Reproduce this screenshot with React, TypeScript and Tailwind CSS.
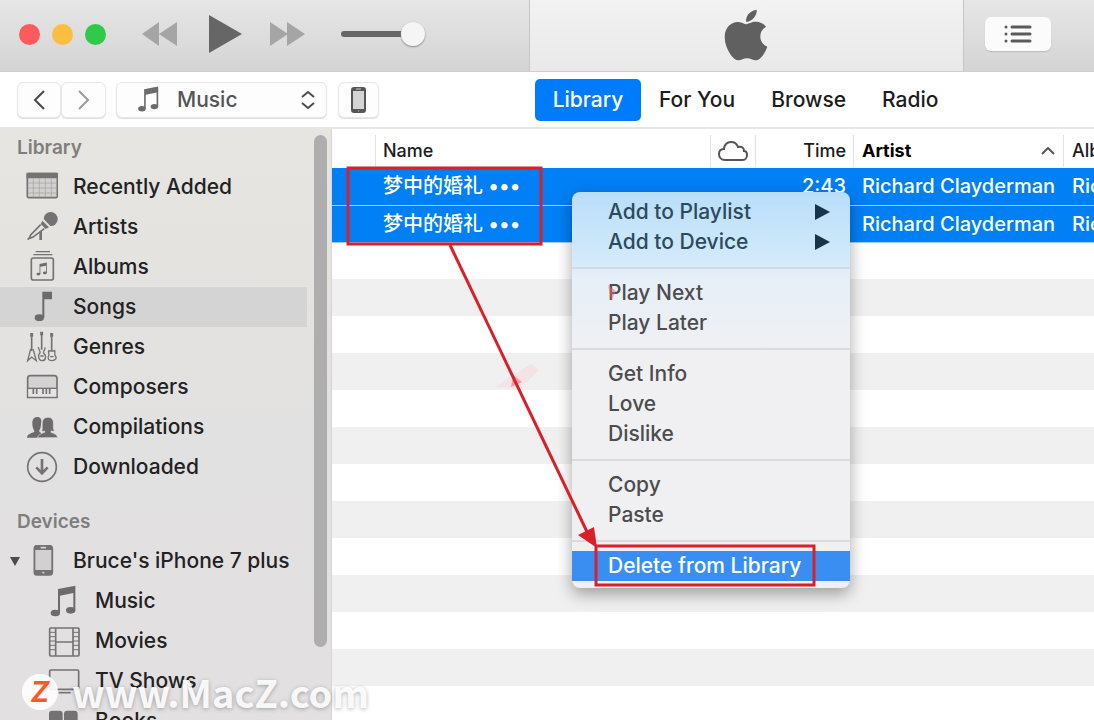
import React from 'react';
import { FaApple } from 'react-icons/fa';

const Svg: React.FC<{ children: React.ReactNode }> = ({ children }) => (
  <svg viewBox="0 0 96 96" className="w-8 h-8 shrink-0" fill="none" stroke="#747273" strokeWidth="5" aria-hidden="true">
    {children}
  </svg>
);

const NoteShape = () => (
  <g fill="#6b6b6b" stroke="none">
    <path d="M30 12 L82 2 V76 H76 V24 L36 32 V84 H30 Z" />
    <ellipse cx="22" cy="84" rx="14" ry="10" />
    <ellipse cx="68" cy="76" rx="14" ry="10" />
  </g>
);

const RecentIcon = () => (
  <Svg>
    <rect x="4" y="8" width="90" height="72" rx="4" fill="#d3d1cf" />
    <path d="M4 8h90v11H4z" fill="#747273" />
    <path d="M22 22v57M40 22v57M58 22v57M76 22v57M6 36h86M6 51h86M6 66h86" strokeWidth="2" stroke="#a3a19f" />
  </Svg>
);

const MicIcon = () => (
  <Svg>
    <path d="M53 24 A21 21 0 1 1 73 45 Z" fill="#747273" stroke="none" />
    <path d="M49 29 L69 49 L59 54 L44 39 Z" fill="#747273" stroke="none" />
    <path d="M44 41 L14 72 L10 82 L20 79 L55 53 M14 77 L5 86" />
    <path d="M40 66 L48 59 V87 H40 Z" fill="#747273" stroke="none" />
  </Svg>
);

const AlbumIcon = () => (
  <Svg>
    <path d="M29 2h43M22 11h57" strokeWidth="4" />
    <rect x="16" y="21" width="66" height="66" rx="6" />
    <g transform="translate(28 34) scale(0.42)">
      <NoteShape />
    </g>
  </Svg>
);

const SongIcon = () => (
  <Svg>
    <g fill="#6b6b6b" stroke="none">
      <path d="M49 2h29v23H55v55h-6z" />
      <ellipse cx="40" cy="80" rx="14" ry="10" />
    </g>
  </Svg>
);

const GenreIcon = () => (
  <Svg>
    <g strokeWidth="5">
      <path d="M17 16V60M47 12V56M77 16V60" />
      <path d="M17 6v11M47 2v11M77 6v11" strokeWidth="9" />
    </g>
    <g strokeWidth="4">
      <path d="M14 54 L5 89 L17 78 L31 89 L21 54" />
      <path d="M37 48 C38 58 44 59 42 66 C34 72 38 88 47 89 C60 90 62 74 53 67 C50 60 58 59 57 49 M43 75h10" />
      <path d="M69 57 C64 65 72 68 68 74 C63 82 68 89 77 89 C90 89 94 80 87 73 C84 68 90 63 85 57 M70 60h15M72 77h11" />
    </g>
  </Svg>
);

const PianoIcon = () => (
  <Svg>
    <path d="M5 79V22q0-8 8-8h72q8 0 8 8v57z" fill="#d4d2d2" />
    <path d="M7 54h84v23H7z" fill="#e6e4e4" stroke="none" />
    <path d="M5 52h88" strokeWidth="4" />
    <path d="M22 54v15M32 54v15M51 54v15M61 54v15M71 54v15" strokeWidth="5" />
  </Svg>
);

const PeopleIcon = () => (
  <Svg>
    <g fill="#6c6a6b" stroke="none">
      <path d="M3 80 C4 70 12 68 25 63 C26 58 19 52 19 38 C19 24 24 18 34 18 C43 18 46 24 46 31 C44 42 46 50 40 58 V63 C49 66 53 72 53 80 Z" />
      <path d="M34 80 C36 72 44 68 56 64 V60 C52 61 48 61 47 59 C51 52 47 43 49 32 C51 23 57 19 66 19 C76 19 81 24 82 33 C83 43 80 52 85 59 C81 62 77 60 75 60 V64 C86 68 94 71 95 80 Z" stroke="#e2e0e1" strokeWidth="2" />
    </g>
  </Svg>
);

const DownloadIcon = () => (
  <Svg>
    <circle cx="48" cy="48" r="43" />
    <path d="M48 24v42M31 49l17 18 17-18" strokeWidth="8" />
  </Svg>
);

const PhoneIcon = () => (
  <Svg>
    <rect x="25" y="2" width="54" height="88" rx="8" fill="#747273" />
    <path d="M28 15h48v60H28z" fill="#d2d0d0" stroke="none" />
    <path d="M44 8h16M49 83h6" stroke="#d2d0d0" />
  </Svg>
);

const MusicIcon = () => (
  <Svg>
    <NoteShape />
  </Svg>
);

const MovieIcon = () => (
  <Svg>
    <rect x="5" y="9" width="88" height="84" rx="3" />
    <path d="M23 10v82M75 10v82M23 51h52" />
    <path d="M5 22h18M5 35h18M5 48h18M5 61h18M5 74h18M75 22h18M75 35h18M75 48h18M75 61h18M75 74h18" strokeWidth="3" />
  </Svg>
);

const TvIcon = () => (
  <Svg>
    <rect x="5" y="15" width="87" height="58" rx="4" />
    <path d="M32 83h36" />
  </Svg>
);

const BookIcon = () => (
  <Svg>
    <path d="M3 86V26q0-9 10-9h21q10 0 10 9v60zM48 86V26q0-9 10-9h21q10 0 10 9v60z" fill="#747273" stroke="none" />
  </Svg>
);

const libraryItems = [
  { label: 'Recently Added', Icon: RecentIcon },
  { label: 'Artists', Icon: MicIcon },
  { label: 'Albums', Icon: AlbumIcon },
  { label: 'Songs', Icon: SongIcon, active: true },
  { label: 'Genres', Icon: GenreIcon },
  { label: 'Composers', Icon: PianoIcon },
  { label: 'Compilations', Icon: PeopleIcon },
  { label: 'Downloaded', Icon: DownloadIcon },
];

const deviceItems = [
  { label: 'Music', Icon: MusicIcon },
  { label: 'Movies', Icon: MovieIcon },
  { label: 'TV Shows', Icon: TvIcon },
  { label: 'Books', Icon: BookIcon },
];

const tabs = ['For You', 'Browse', 'Radio'];

const songs = [
  { id: 1, name: '梦中的婚礼 •••', time: '2:43', artist: 'Richard Clayderman', album: 'Richard Clayderman' },
  { id: 2, name: '梦中的婚礼 •••', time: '2:43', artist: 'Richard Clayderman', album: 'Richard Clayderman' },
];

const menuGroups = [
  ['Add to Playlist', 'Add to Device'],
  ['Play Next', 'Play Later'],
  ['Get Info', 'Love', 'Dislike'],
  ['Copy', 'Paste'],
  ['Delete from Library'],
];

const TopBar = () => (
  <header className="flex h-[72px] shrink-0 border-b border-[#cfcfcf] bg-linear-to-b from-[#e6e6e6] to-[#d4d4d4]">
    <div className="flex w-[530px] shrink-0 items-center border-r border-[#c6c6c6] pb-[3px] pl-[19px]">
      <div className="flex gap-3">
        <button aria-label="Close" className="h-[21px] w-[21px] rounded-full bg-[#fc5b5e]" />
        <button aria-label="Minimize" className="h-[21px] w-[21px] rounded-full bg-[#fdbd40]" />
        <button aria-label="Zoom" className="h-[21px] w-[21px] rounded-full bg-[#2fcb48]" />
      </div>
      <button aria-label="Previous" className="ml-9">
        <svg viewBox="0 0 35 24" className="h-6 w-[35px]" fill="#a5a5a5">
          <path d="M0 12 17 0v24zM17 12 35 0v24z" />
        </svg>
      </button>
      <button aria-label="Play" className="ml-8">
        <svg viewBox="0 0 33 38" className="h-[38px] w-[33px]" fill="#666">
          <path d="M0 0 33 19 0 38z" />
        </svg>
      </button>
      <button aria-label="Next" className="ml-7">
        <svg viewBox="0 0 35 24" className="h-6 w-[35px]" fill="#a5a5a5">
          <path d="M0 0 18 12 0 24zM17 0 35 12 17 24z" />
        </svg>
      </button>
      <input
        type="range"
        aria-label="Volume"
        defaultValue={100}
        className="ml-9 w-[84px] appearance-none bg-transparent [&::-webkit-slider-runnable-track]:h-[6px] [&::-webkit-slider-runnable-track]:rounded-full [&::-webkit-slider-runnable-track]:bg-[#666] [&::-webkit-slider-thumb]:-mt-[9px] [&::-webkit-slider-thumb]:h-6 [&::-webkit-slider-thumb]:w-6 [&::-webkit-slider-thumb]:appearance-none [&::-webkit-slider-thumb]:rounded-full [&::-webkit-slider-thumb]:bg-[#f5f5f5] [&::-webkit-slider-thumb]:shadow-[0_1px_2px_#888]"
      />
    </div>
    <div className="flex flex-1 items-center justify-center bg-linear-to-b from-[#f2f2f2] to-[#e9e9e9] pr-[2px] pb-[2px]">
      <FaApple className="h-[58px] w-11 text-[#606060]" />
    </div>
    <div className="flex w-[131px] shrink-0 items-center border-l border-[#c6c6c6] pb-[3px] pl-[21px]">
      <button aria-label="Up Next" className="flex h-[34px] w-[66px] items-center justify-center rounded-md bg-[#fbfbfb] shadow-[0_1px_1px_#bbb]">
        <svg viewBox="0 0 28 18" className="h-[18px] w-7" stroke="#5a5a5a" strokeWidth="3" strokeLinecap="round">
          <path d="M8 2h18M8 9h18M8 16h18" />
          <path d="M2 2h0M2 9h0M2 16h0" />
        </svg>
      </button>
    </div>
  </header>
);

const NavBar = () => (
  <div className="flex h-[57px] shrink-0 items-center border-b-2 border-[#e6e6e6] bg-white">
    <div className="flex w-[535px] shrink-0 items-center pl-[17px]">
      <button aria-label="Back" className="flex h-9 w-11 items-center justify-center rounded-md border border-[#e7e7e7] bg-[#fdfdfd] shadow-[0_1px_1px_#ddd]">
        <svg viewBox="0 0 12 20" className="h-5 w-3" fill="none" stroke="#484848" strokeWidth="2">
          <path d="M11 1 2 10l9 9" />
        </svg>
      </button>
      <button aria-label="Forward" className="flex h-9 w-[45px] items-center justify-center rounded-md border border-[#e7e7e7] bg-[#fdfdfd] shadow-[0_1px_1px_#ddd]">
        <svg viewBox="0 0 12 20" className="h-5 w-3" fill="none" stroke="#9a9a9a" strokeWidth="2">
          <path d="m1 1 9 9-9 9" />
        </svg>
      </button>
      <div className="relative ml-[10px] h-9 w-[211px]">
        <select aria-label="Media type" className="h-full w-full appearance-none rounded-md border border-[#e7e7e7] bg-[#fdfdfd] pl-[60px] text-[21px] font-medium text-[#555] shadow-[0_1px_1px_#ddd]">
          <option>Music</option>
          <option>Movies</option>
        </select>
        <svg viewBox="0 0 96 96" className="pointer-events-none absolute left-5 top-1 h-[26px] w-[26px]">
          <NoteShape />
        </svg>
        <svg viewBox="0 0 14 20" className="pointer-events-none absolute right-3 top-2 h-5 w-[14px]" fill="none" stroke="#4c4c4c" strokeWidth="2">
          <path d="m1 7 6-5 6 5M1 13l6 5 6-5" />
        </svg>
      </div>
      <button aria-label="iPhone" className="ml-[11px] flex h-9 w-[41px] items-center justify-center rounded-md border border-[#e7e7e7] bg-[#fdfdfd] shadow-[0_1px_1px_#ddd]">
        <svg viewBox="0 0 15 26" className="h-[26px] w-[15px]">
          <rect width="15" height="26" rx="3" fill="#555" />
          <path d="M2 4h11v18H2z" fill="#d4d4d4" />
          <path d="M5 2h5M7 24h1" stroke="#ccc" />
        </svg>
      </button>
    </div>
    <nav className="flex items-center text-[21px] font-medium text-[#1c1c1c]">
      <button className="h-[42px] w-[106px] rounded-[5px] bg-[#007bfb] text-white">Library</button>
      {tabs.map((tab) => (
        <button key={tab} className="px-[18px]">
          {tab}
        </button>
      ))}
    </nav>
  </div>
);

const Sidebar = () => (
  <aside className="flex w-[332px] shrink-0 items-start overflow-hidden border-r border-[#d6d5d4] bg-linear-to-b from-[#e6e5e0] via-[#e2e1e1] to-[#e2e0e1]">
    <div className="w-[307px] text-[21px] font-medium text-[#222]">
      <h2 className="flex h-[38px] items-center pl-[17px] text-[19px] font-semibold text-[#7f7e7c]">Library</h2>
      <ul>
        {libraryItems.map(({ label, Icon, active }) => (
          <li key={label}>
            <a href="#" className={`flex h-10 items-center gap-[15px] pl-[26px] ${active ? 'bg-[#d5d4d4]' : ''}`}>
              <Icon />
              {label}
            </a>
          </li>
        ))}
      </ul>
      <h2 className="mt-[17px] flex h-[37px] items-center pl-[17px] text-[19px] font-semibold text-[#7f7e7c]">Devices</h2>
      <a href="#" className="flex h-10 items-center">
        <svg viewBox="0 0 10 10" className="ml-[10px] h-[10px] w-[10px]" fill="#4d4b4b">
          <path d="M0 1h10L5 10z" />
        </svg>
        <span className="ml-[6px] flex items-center gap-[15px] whitespace-nowrap">
          <PhoneIcon />
          Bruce's iPhone 7 plus
        </span>
      </a>
      <ul>
        {deviceItems.map(({ label, Icon }) => (
          <li key={label}>
            <a href="#" className="flex h-10 items-center gap-[15px] pl-12">
              <Icon />
              {label}
            </a>
          </li>
        ))}
      </ul>
    </div>
    {/* Scrollbar thumb */}
    <div className="ml-[7px] mt-[6px] h-[512px] w-[13px] rounded-full bg-[#afaeae]" />
  </aside>
);

const SongTable = () => (
  <table className="w-full table-fixed border-collapse text-left text-xl whitespace-nowrap">
    <thead>
      <tr className="h-[39px] text-lg text-[#1c1c1c] [&>th]:p-0 [&>th]:pt-1 [&>th]:font-medium">
        <th className="w-[43px]" aria-label="Status" />
        <th>
          <div className="border-l border-[#e2e2e2] py-[2px] pl-[7px]">Name</div>
        </th>
        <th className="w-[46px]" aria-label="iCloud">
          <div className="flex h-8 items-center justify-center border-x border-[#e2e2e2]">
            <svg viewBox="0 0 30 20" className="h-5 w-[30px]" fill="none" stroke="#555" strokeWidth="2">
              <path d="M7 19C3 19 1 16 1 13s2-5 5-5c0-4 3-7 7-7 3 0 6 2 7 5 4-1 6 1 6 4 2 0 3 2 3 4 0 3-2 5-4 5z" />
            </svg>
          </div>
        </th>
        <th className="w-[98px]">
          <div className="border-r border-[#e2e2e2] py-[2px] pr-[7px] text-right">Time</div>
        </th>
        <th className="w-[210px]">
          <div className="flex items-center justify-between border-r border-[#e2e2e2] py-[2px] pr-2 pl-2 font-bold text-black">
            Artist
            <svg viewBox="0 0 14 8" className="h-2 w-[14px]" fill="none" stroke="#555" strokeWidth="2">
              <path d="m1 7 6-6 6 6" />
            </svg>
          </div>
        </th>
        <th className="w-[30px] overflow-hidden">
          <div className="pl-2">Album</div>
        </th>
      </tr>
    </thead>
    <tbody>
      {songs.map((song) => (
        <tr key={song.id} className="h-[37px] border-b border-[#9fd0fb] bg-[#017ff5] font-medium text-white [&>td]:p-0">
          <td />
          <td className="pl-2!">{song.name}</td>
          <td />
          <td className="pr-2! text-right">{song.time}</td>
          <td className="pl-2!">{song.artist}</td>
          <td className="overflow-hidden pl-2!">{song.album}</td>
        </tr>
      ))}
      {Array.from({ length: 13 }, (_, i) => (
        <tr key={i} className="h-[37px] odd:bg-white even:bg-[#f0f0f0]">
          <td colSpan={6} />
        </tr>
      ))}
    </tbody>
  </table>
);

const ContextMenu = () => (
  <div
    role="menu"
    className="absolute top-[63px] left-[240px] w-[278px] rounded-lg bg-[#f0f0f1] bg-[linear-gradient(#b9defa_0px,#d3eafa_70px,#e6eff8_84px,#f0f0f2_160px)] pt-[5px] pb-[7px] text-[21px] font-medium shadow-[0_6px_16px_rgba(0,0,0,0.35)]"
  >
    {menuGroups.map((group, i) => (
      <div key={group[0]}>
        {i > 0 && (
          <div className="flex h-[21px] items-center" role="separator">
            <div className="h-[2px] w-full bg-[#c8ced3]/60" />
          </div>
        )}
        {group.map((label) => (
          <button
            key={label}
            role="menuitem"
            className={`flex h-[30px] w-full items-center justify-between pr-5 pl-9 ${
              i === 4 ? 'bg-[#3a8ef2] text-white' : i === 0 ? 'text-[#2c4a5e]' : 'text-[#4c4c4e]'
            }`}
          >
            {label}
            {i === 0 && (
              <svg viewBox="0 0 15 16" className="h-4 w-[15px]" fill="#16344a">
                <path d="M0 0 15 8 0 16z" />
              </svg>
            )}
          </button>
        ))}
      </div>
    ))}
  </div>
);

// Red boxes and the arrow from the selected songs to the delete command
const Annotations = () => (
  <svg viewBox="0 0 520 480" className="pointer-events-none absolute top-0 left-0 h-[480px] w-[520px]" fill="none" stroke="#d8202a" strokeWidth="3">
    <path d="M163 258l14-9 22-14 8 6-12 12-12 6z" fill="#f7cfd5" fillOpacity="0.4" stroke="none" />
    <path d="M181 246l9 7-11 5z" fill="#f0808c" fillOpacity="0.7" stroke="none" />
    <path d="M276 156l8 6-5 10z" fill="#ee6a70" fillOpacity="0.5" stroke="none" />
    <rect x="16" y="39" width="193" height="76" />
    <path d="M118 116 257 407" />
    <path d="M246 406l16-8 3 21z" fill="#d8202a" stroke="none" />
    <rect x="264" y="417" width="218" height="39" />
  </svg>
);

const Watermark = () => (
  <div className="pointer-events-none absolute bottom-[6px] left-[22px] flex items-center gap-[14px]">
    <span className="flex h-9 w-9 items-center justify-center rounded-full bg-white/90 text-[28px] font-bold text-[#fb5a26] italic">
      Z
    </span>
    <span className="font-['Noto_Sans_CJK_SC'] text-[38px] leading-[44px] font-bold text-white/90 [text-shadow:0_1px_4px_rgba(0,0,0,0.3)]">
      www.MacZ.com
    </span>
  </div>
);

export default function App() {
  return (
    <div className="relative flex h-screen flex-col overflow-hidden bg-white font-['Inter','Noto_Sans_CJK_SC',sans-serif]">
      <TopBar />
      <NavBar />
      <div className="flex min-h-0 flex-1">
        <Sidebar />
        <main className="relative min-w-0 flex-1 overflow-hidden">
          <SongTable />
          <ContextMenu />
          <Annotations />
        </main>
      </div>
      <Watermark />
    </div>
  );
}
